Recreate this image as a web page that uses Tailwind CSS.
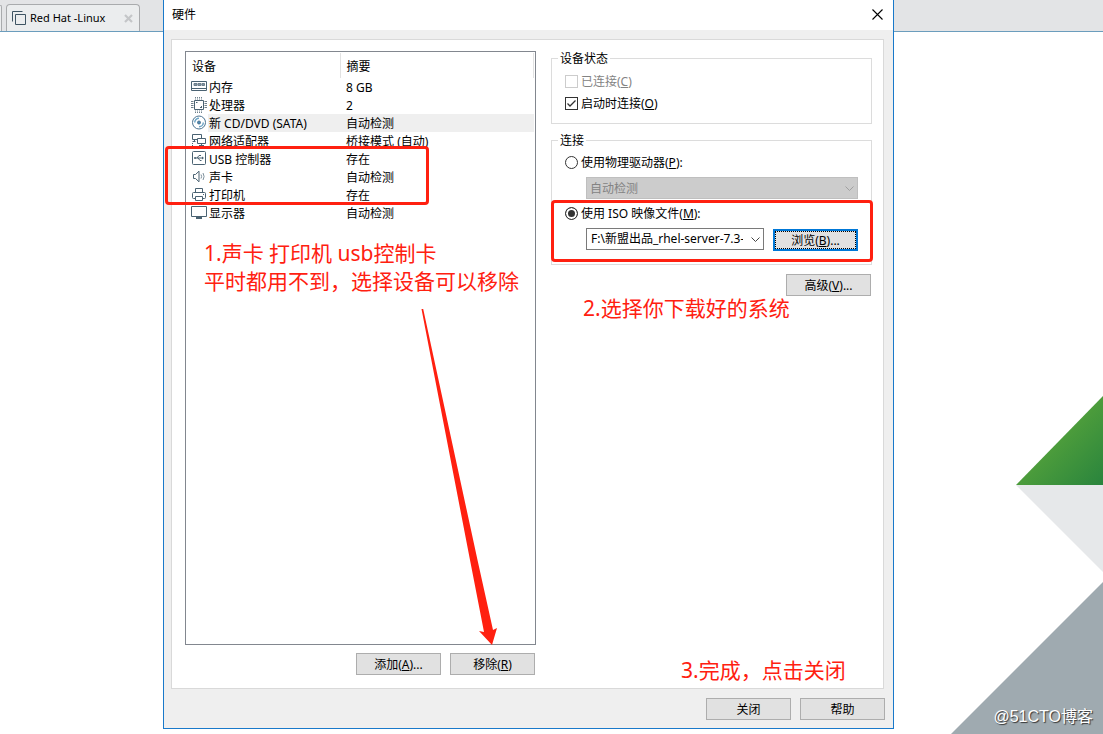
<!DOCTYPE html>
<html lang="zh-CN">
<head>
<meta charset="utf-8">
<title>硬件</title>
<script src="https://cdn.jsdelivr.net/npm/@tailwindcss/browser@4"></script>
</head>
<body class="relative min-h-screen overflow-hidden bg-white font-['Noto_Sans','Noto_Sans_CJK_SC',sans-serif] text-[12px] leading-[18px] text-black">

<header class="flex h-8 items-end border-b border-[#6b9dbd] bg-[#e3e4e6]">
  <div class="h-[26px] w-[2px] rounded-tr-sm border-t border-r border-[#a9abad] bg-[#ebedee]"></div>
  <div class="ml-1 flex h-[27px] w-[134px] items-center rounded-t-sm border border-b-0 border-[#a9abad] bg-[#ebedee] pl-[5px] pr-[6px]">
    <svg class="h-[15px] w-[15px]" viewBox="0 0 15 15" fill="none" stroke="#3e5463" aria-hidden="true"><path d="M.5 10.500V.5h10"/><path d="M3.500 3.500h10v10h-10z"/></svg>
    <a href="#" class="ml-[3px] flex-1 whitespace-nowrap text-[11px]">Red Hat -Linux</a>
    <button aria-label="关闭标签" class="grid place-items-center"><svg class="h-[9px] w-[9px]" viewBox="0 0 9 9" stroke="#c4c6c8" stroke-width="2.200"><path d="M1 1l7 7M8 1l-7 7"/></svg></button>
  </div>
</header>

<svg class="absolute right-0 bottom-0 h-[338px] w-[152px]" viewBox="0 0 152 338" aria-hidden="true">
  <defs><linearGradient id="leaf" x1="0.4" y1="0.4" x2="1" y2="1"><stop offset="0" stop-color="#53a13b"/><stop offset="1" stop-color="#29843d"/></linearGradient></defs>
  <path fill="#e6e8ea" d="M65 89H152V176Z"/>
  <path fill="url(#leaf)" d="M65 89L152 0V89Z"/>
  <path fill="#9faab0" d="M0 338L152 186V338Z"/>
</svg>
<p class="absolute right-[10px] bottom-2 font-['Liberation_Sans','Noto_Sans_CJK_SC',sans-serif] text-[16px] text-white [text-shadow:1px_1px_1px_#333]">@51CTO博客</p>

<section aria-label="硬件" class="absolute top-0 left-[163px] w-[731px] border border-t-0 border-[#1979ca] bg-[#efefef]">
  <div class="flex h-[30px] items-center justify-between bg-white pr-[10px] pl-2">
    <h1>硬件</h1>
    <button aria-label="关闭窗口" class="pb-[2px]"><svg class="block h-[11px] w-[11px]" viewBox="0 0 11 11" stroke="#000" stroke-width="1.100"><path d="M.5.5l10 10M10.500.5l-10 10"/></svg></button>
  </div>

  <main class="mt-[9px] mr-[9px] ml-[7px] flex justify-between border border-[#d9d9d9] bg-white pt-[10px] pr-[11px] pb-[13px] pl-[13px]">
    <div class="w-[351px]">
      <div class="mt-px min-h-[594px] border border-[#82878f] pr-px pt-px">
        <table class="w-full table-fixed border-collapse text-left">
          <colgroup><col class="w-[22px]"><col class="w-[132px]"><col></colgroup>
          <thead><tr class="h-[25px]">
            <th colspan="2" class="border-r border-[#e2e2e2] p-0 pt-[2px] pl-[6px] font-normal">设备</th>
            <th class="border-r border-[#e2e2e2] p-0 pt-[2px] pl-[6px] font-normal">摘要</th>
          </tr></thead>
          <tbody class="leading-4">
            <tr class="h-[18px]"><td class="p-0 pl-[5px]"><svg class="block h-4 w-4" viewBox="0 0 16 16" fill="none" stroke="#4a6272"><path d="M.5 2.500h15v9H11M5 11.500H.5v-9M.5 9.500h15M4.500 11.500h7"/><path d="M3 4.500h3v2H3zM7 4.500h3v2H7zM11 4.500h2.500v2H11z" fill="#8494a0" stroke="#6c7f8c"/></svg></td><td class="p-0 pt-[2px] pl-px">内存</td><td class="p-0 pt-[2px] pl-[6px]">8 GB</td></tr>
            <tr class="h-[18px]"><td class="p-0 pl-[5px]"><svg class="block h-4 w-4" viewBox="0 0 16 16" fill="none" stroke="#4a6272"><path d="M3.500 3.500h9v9h-9z"/><path stroke="#6f818d" d="M4 .5h1M6 .5h1M8 .5h1M10 .5h1M4 2h1M6 2h1M8 2h1M10 2h1M4 14h1M6 14h1M8 14h1M10 14h1M4 15.500h1M6 15.500h1M8 15.500h1M10 15.500h1M0 4.500h2.500M0 6.500h2.500M0 8.500h2.500M0 10.500h2.500M13.500 4.500H16M13.500 6.500H16M13.500 8.500H16M13.500 10.500H16"/><path d="M5 5.500h1.500M9 10.500h2M10.500 9v2"/></svg></td><td class="p-0 pt-[2px] pl-px">处理器</td><td class="p-0 pt-[2px] pl-[6px]">2</td></tr>
            <tr class="h-[18px]"><td class="p-0 pl-[5px]"><svg class="block h-4 w-4" viewBox="0 0 16 16" fill="none" stroke="#4b7290"><circle cx="8" cy="7.500" r="6.500"/><circle cx="8" cy="7.500" r="1.500" fill="#4b8ab5"/><path d="M3.700 7.500A4.300 4.300 0 0 1 8 3.200M12.300 7.500A4.300 4.300 0 0 1 8 11.800" stroke="#6ea6c7" stroke-width="1.500"/></svg></td><td class="bg-[#efefef] p-0 pt-[2px] pl-px">新 CD/DVD (SATA)</td><td class="bg-[#efefef] p-0 pt-[2px] pl-[6px]">自动检测</td></tr>
            <tr class="h-[18px]"><td class="p-0 pl-[5px]"><svg class="block h-4 w-4" viewBox="0 0 16 16" fill="none" stroke="#4a6272"><path d="M1.500 1.500h9v5h-9zM3.500 6.500v2M1.500 8.500h3"/><path fill="#fff" d="M6.500 5.500h8v5h-8zM10.500 10.500v2M8 12.500h5"/><path stroke-dasharray="1 1" d="M1.500 10v3.500H7"/></svg></td><td class="p-0 pt-[2px] pl-px">网络适配器</td><td class="p-0 pt-[2px] pl-[6px]">桥接模式 (自动)</td></tr>
            <tr class="h-[18px]"><td class="p-0 pl-[5px]"><svg class="block h-4 w-4" viewBox="0 0 16 16" fill="none" stroke="#4a6272"><rect x="1.500" y=".5" width="13" height="13" rx="1"/><path d="M4 7h8M6 7l2-2.500h2M7 7l2 2.500h1.500"/><circle cx="4" cy="7" r="1" fill="#4a6272" stroke="none"/><path fill="#4a6272" stroke="none" d="M11 5.500L13 7l-2 1.500z"/></svg></td><td class="p-0 pt-[2px] pl-px">USB 控制器</td><td class="p-0 pt-[2px] pl-[6px]">存在</td></tr>
            <tr class="h-[18px]"><td class="p-0 pl-[5px]"><svg class="block h-4 w-4" viewBox="0 0 16 16" fill="none" stroke="#4a6272"><path d="M2.500 5.500h2L8 2.200v10.600L4.500 9.500h-2z"/><path d="M10 5.500q1.300 2 0 4M12 4q2.200 3.500 0 7" stroke="#7f919d"/></svg></td><td class="p-0 pt-[2px] pl-px">声卡</td><td class="p-0 pt-[2px] pl-[6px]">自动检测</td></tr>
            <tr class="h-[18px]"><td class="p-0 pl-[5px]"><svg class="block h-4 w-4" viewBox="0 0 16 16" fill="none" stroke="#4a6272"><path d="M4.500 5.500v-4h7v4M4 11.500H2.500a1 1 0 0 1-1-1v-4a1 1 0 0 1 1-1h11a1 1 0 0 1 1 1v4a1 1 0 0 1-1 1H12"/><path d="M4.500 9.500h7v4h-7zM12 7.500h1"/></svg></td><td class="p-0 pt-[2px] pl-px">打印机</td><td class="p-0 pt-[2px] pl-[6px]">存在</td></tr>
            <tr class="h-[18px]"><td class="p-0 pl-[5px]"><svg class="block h-4 w-4" viewBox="0 0 16 16" fill="none" stroke="#4a6272"><path d="M.5 1.500h15v10H.5z"/><path d="M5 13h6" stroke-width="2"/></svg></td><td class="p-0 pt-[2px] pl-px">显示器</td><td class="p-0 pt-[2px] pl-[6px]">自动检测</td></tr>
          </tbody>
        </table>
      </div>
      <div class="mt-2 flex justify-end gap-[9px] pr-px">
        <button class="h-[22px] w-[85px] border border-[#adadad] bg-[#e1e1e1] pt-[2px]">添加(<u>A</u>)...</button>
        <button class="h-[22px] w-[85px] border border-[#adadad] bg-[#e1e1e1] pt-[2px]">移除(<u>R</u>)</button>
      </div>
    </div>

    <div class="w-[321px]">
      <fieldset class="border border-[#dcdcdc] pr-3 pb-[9px] pl-[13px]">
        <legend class="-ml-[7px] px-[2px] pt-[2px] leading-[14px]">设备状态</legend>
        <div class="mt-1 flex h-[22px] items-center gap-[3px] text-[#838383]">
          <input id="connected" type="checkbox" disabled class="h-[13px] w-[13px] appearance-none border border-[#ccc] bg-white">
          <label for="connected" class="pt-px">已连接(<u>C</u>)</label>
        </div>
        <div class="flex h-[22px] items-center gap-[3px]">
          <span class="grid">
            <input id="poweron" type="checkbox" checked class="col-start-1 row-start-1 h-[13px] w-[13px] appearance-none border border-[#333] bg-white">
            <svg class="pointer-events-none col-start-1 row-start-1 h-[13px] w-[13px]" viewBox="0 0 13 13" fill="none" stroke="#333" stroke-width="1.300"><path d="M2.500 6.500L5 9l5.500-5.500"/></svg>
          </span>
          <label for="poweron" class="pt-px">启动时连接(<u>O</u>)</label>
        </div>
      </fieldset>

      <fieldset class="mt-2 border border-[#dcdcdc] pr-[13px] pb-[14px] pl-[13px]">
        <legend class="-ml-[7px] px-[2px] pt-[2px] leading-[14px]">连接</legend>
        <div class="mt-1 flex h-5 items-center gap-[3px]">
          <input id="physical" name="source" type="radio" class="h-[13px] w-[13px] appearance-none rounded-full border border-[#333] bg-white checked:bg-[#333] checked:shadow-[inset_0_0_0_2px_#fff]">
          <label for="physical" class="pt-px">使用物理驱动器(<u>P</u>):</label>
        </div>
        <div class="mt-[5px] ml-[21px] grid items-center">
          <select disabled aria-label="物理驱动器" class="col-start-1 row-start-1 h-[22px] w-full appearance-none border border-[#bfbfbf] bg-[#ccc] pt-[2px] pl-[3px] text-[#838383] opacity-100"><option>自动检测</option></select>
          <svg class="pointer-events-none col-start-1 row-start-1 mr-1 h-[5px] w-[9px] justify-self-end" viewBox="0 0 9 5" fill="none" stroke="#a0a0a0"><path d="M.5.5l4 4 4-4"/></svg>
        </div>
        <div class="mt-1 flex h-5 items-center gap-[3px]">
          <input id="iso" name="source" type="radio" checked class="h-[13px] w-[13px] appearance-none rounded-full border border-[#333] bg-white checked:bg-[#333] checked:shadow-[inset_0_0_0_2px_#fff]">
          <label for="iso" class="pt-px">使用 ISO 映像文件(<u>M</u>):</label>
        </div>
        <div class="mt-[5px] ml-[21px] flex justify-between">
          <div class="grid h-[22px] w-[178px] items-center">
            <select aria-label="ISO 映像文件" class="col-start-1 row-start-1 h-[22px] w-[178px] appearance-none border border-[#7a7a7a] bg-white pr-5 pl-1"><option>F:\新盟出品_rhel-server-7.3-</option></select>
            <svg class="pointer-events-none col-start-1 row-start-1 mr-1 h-[5px] w-[9px] justify-self-end" viewBox="0 0 9 5" fill="none" stroke="#444"><path d="M.5.5l4 4 4-4"/></svg>
          </div>
          <button class="mt-px -mb-px h-[22px] w-[85px] border-2 border-[#0078d7] bg-[#e1e1e1] pt-[2px] leading-[14px] outline-1 -outline-offset-3 outline-dotted outline-black">浏览(<u>B</u>)...</button>
        </div>
      </fieldset>

      <div class="mt-[9px] flex justify-end pr-px">
        <button class="h-[22px] w-[85px] border border-[#adadad] bg-[#e1e1e1] pt-[2px]">高级(<u>V</u>)...</button>
      </div>
    </div>
  </main>

  <footer class="flex justify-end gap-[9px] pt-[9px] pr-2 pb-2">
    <button class="h-[22px] w-[85px] border border-[#adadad] bg-[#e1e1e1] pt-[2px]">关闭</button>
    <button class="h-[22px] w-[85px] border border-[#adadad] bg-[#e1e1e1] pt-[2px]">帮助</button>
  </footer>

  <!-- Annotations drawn over the dialog -->
  <div class="pointer-events-none text-[21px] leading-7 whitespace-nowrap text-[#ff2010]">
    <div class="absolute top-[146px] left-px h-[59px] w-[264px] rounded-[4px] border-3 border-[#ff2010]"></div>
    <div class="absolute top-[200px] left-[387px] h-[62px] w-[322px] rounded-[4px] border-3 border-[#ff2010]"></div>
    <p class="absolute top-[239px] left-10">1.声卡 打印机 usb控制卡<br>平时都用不到，选择设备可以移除</p>
    <p class="absolute top-[294px] left-[419px]">2.选择你下载好的系统</p>
    <p class="absolute top-[656px] left-[517px]">3.完成，点击关闭</p>
    <svg class="absolute top-[308px] left-[257px] h-[338px] w-[77px]" viewBox="0 0 77 338" aria-hidden="true"><path fill="#ff2010" d="M.5 1H2.200L56.500 252L72 322L76 320L71 337L58 323L63 324L49 252Z"/></svg>
  </div>
</section>
</body>
</html>
